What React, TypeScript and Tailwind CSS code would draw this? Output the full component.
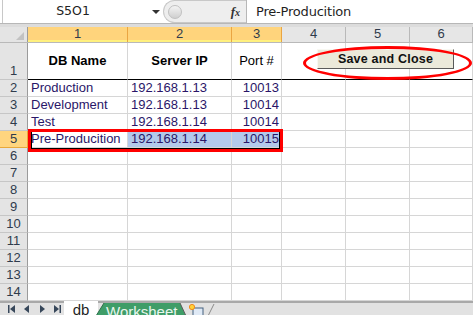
import React from 'react';

// column widths, in px: columns 1..6 (row header is 28px)
const COLS = [100, 104, 50, 64, 64, 63];

const rows: { name: string; ip: string; port: string }[] = [
  { name: 'Production', ip: '192.168.1.13', port: '10013' },
  { name: 'Development', ip: '192.168.1.13', port: '10014' },
  { name: 'Test', ip: '192.168.1.14', port: '10014' },
  { name: 'Pre-Producition', ip: '192.168.1.14', port: '10015' },
];

function RowHeader({ n, active }: { n: number; active?: boolean }) {
  return (
    <div
      className={`w-[28px] shrink-0 flex items-end justify-center border-r border-b text-[13px] leading-[16px] text-[#2f3b4c] ${
        active ? 'bg-[#ffd57f] border-r-[#e8a83a] border-b-[#e8a83a]' : 'bg-[#e4e4e4] border-r-[#9b9b9b] border-b-[#c6c6c6]'
      }`}
    >
      {n}
    </div>
  );
}

function Cell({ w, children, className = '' }: { w: number; children?: React.ReactNode; className?: string }) {
  return (
    <div
      style={{ width: w }}
      className={`shrink-0 border-r border-b border-[#d6d6d6] flex items-center overflow-hidden whitespace-nowrap ${className}`}
    >
      {children}
    </div>
  );
}

function ColHeader({ label, w, selected }: { label: string; w: number; selected?: boolean }) {
  return (
    <div
      style={{ width: w }}
      className={`shrink-0 flex flex-col border-r text-[13px] text-[#2f3b4c] ${
        selected ? 'border-[#eaa542]' : 'border-[#b9b9b9]'
      }`}
    >
      <div className={`flex-1 flex items-center justify-center leading-none ${selected ? 'bg-[#ffd47c]' : 'bg-[#e6e6e6]'}`}>
        {label}
      </div>
      <div className={`h-[3px] ${selected ? 'bg-[#fff07e]' : 'bg-[#e6e6e6]'}`} />
    </div>
  );
}

export default function App() {
  return (
    <div className="w-[473px] h-[315px] overflow-hidden bg-white relative font-['Liberation_Sans',Arial,sans-serif] select-none">
      {/* formula bar */}
      <div className="h-[24px] flex bg-white border-b border-[#b7b7b7]">
        <div className="w-[3px] border-r border-[#c8c8c8]" />
        <div className="w-[160px] flex items-center relative font-['DejaVu_Sans',sans-serif] text-[12.5px] text-[#222]">
          <span className="flex-1 text-center pr-[20px]">S5O1</span>
          <span className="absolute left-[149px] top-[10px] w-0 h-0 border-l-[4px] border-r-[4px] border-t-[4px] border-l-transparent border-r-transparent border-t-[#333]" />
        </div>
        <div className="w-[83px] h-[23px] flex items-center bg-[#eeeeee] rounded-l-[12px] border border-r-0 border-[#c8c8c8] relative">
          <span className="ml-[4px] w-[14px] h-[14px] rounded-full bg-gradient-to-b from-[#f4f4f4] to-[#cfcfcf] border border-[#c0c0c0]" />
          <span className="ml-auto mr-[6px] italic font-['Liberation_Serif',serif] font-bold text-[13px] text-[#333]">
            f<span className="text-[10px]">x</span>
          </span>
        </div>
        <div className="flex-1 border-l border-[#b7b7b7] flex items-center pl-[9px] text-[13px] text-[#1f1f1f] font-['DejaVu_Sans',sans-serif] tracking-[-0.2px]">
          Pre-Producition
        </div>
      </div>
      <div className="h-[3px] bg-[#dcdcdc]" />

      {/* column header row */}
      <div className="h-[16px] flex border-b border-[#b9b9b9]">
        <div className="w-[28px] shrink-0 bg-[#e4e4e4] border-r border-[#9b9b9b] relative">
          <span className="absolute right-[3px] bottom-[2px] w-0 h-0 border-l-[8px] border-b-[8px] border-l-transparent border-b-[#c2c2c2]" />
        </div>
        {COLS.map((w, i) => (
          <ColHeader key={i} label={String(i + 1)} w={w} selected={i < 3} />
        ))}
      </div>

      {/* row 1: titles */}
      <div className="h-[37px] flex">
        <RowHeader n={1} />
        <Cell w={COLS[0]} className="justify-center font-bold text-[13px] text-black border-b-black">DB Name</Cell>
        <Cell w={COLS[1]} className="justify-center font-bold text-[13px] text-black border-b-black">Server IP</Cell>
        <Cell w={COLS[2]} className="justify-center text-[13px] text-black border-b-black">Port #</Cell>
        <Cell w={COLS[3]} className="border-b-black" />
        <Cell w={COLS[4]} className="border-b-black" />
        <Cell w={COLS[5]} className="border-b-black" />
      </div>

      {/* data rows */}
      {rows.map((r, i) => {
        const sel = i === 3;
        return (
          <div key={i} className="h-[17px] flex text-[13px] text-[#2a1668]">
            <RowHeader n={i + 2} active={sel} />
            <Cell w={COLS[0]} className="pl-[3px]">{r.name}</Cell>
            <Cell w={COLS[1]} className={`pl-[3px] ${sel ? 'bg-[#b3c9eb]' : ''}`}>{r.ip}</Cell>
            <Cell w={COLS[2]} className={`justify-end pr-[2px] ${sel ? 'bg-[#b3c9eb]' : ''}`}>{r.port}</Cell>
            <Cell w={COLS[3]} />
            <Cell w={COLS[4]} />
            <Cell w={COLS[5]} />
          </div>
        );
      })}

      {/* empty rows */}
      {Array.from({ length: 9 }, (_, i) => (
        <div key={i} className="h-[17px] flex">
          <RowHeader n={i + 6} />
          {COLS.map((w, j) => (
            <Cell key={j} w={w} />
          ))}
        </div>
      ))}

      {/* sheet tabs */}
      <div className="h-[14px] flex items-start bg-[#e2e2e2] border-t-2 border-[#a9a9a9] relative">
        <div className="w-[64px] flex items-center gap-[7px] pl-[8px] pt-[2px]">
          <svg width="8" height="8" viewBox="0 0 8 8"><rect x="0" y="0" width="1.5" height="8" fill="#37475a" /><path d="M7 0 L2 4 L7 8 Z" fill="#37475a" /></svg>
          <svg width="8" height="8" viewBox="0 0 8 8"><path d="M6 0 L1 4 L6 8 Z" fill="#37475a" /></svg>
          <svg width="8" height="8" viewBox="0 0 8 8"><path d="M2 0 L7 4 L2 8 Z" fill="#37475a" /></svg>
          <svg width="8" height="8" viewBox="0 0 8 8"><path d="M1 0 L6 4 L1 8 Z" fill="#37475a" /><rect x="6.5" y="0" width="1.5" height="8" fill="#37475a" /></svg>
        </div>
        <div className="w-[34px] h-[14px] -mt-[2px] bg-white flex justify-center text-[15px] leading-[18px] text-[#1f1f1f] overflow-hidden">db</div>
        <div className="relative w-[90px] h-[13px] -ml-[2px] overflow-hidden">
          <svg className="absolute inset-0" width="90" height="13" viewBox="0 0 90 13">
            <path d="M0 13 L8 0 L84 0 L90 13 Z" fill="#3f9d68" />
            <path d="M0 13 L8 0" stroke="#2f6f4b" strokeWidth="1" />
            <path d="M84 0 L90 13" stroke="#5b5b5b" strokeWidth="1" />
          </svg>
          <span className="absolute left-[10px] top-[0px] text-[15px] leading-[18px] text-[#e9f6ee]">Worksheet</span>
        </div>
        <div className="relative w-[30px] h-[13px]">
          <svg className="absolute inset-0" width="30" height="13" viewBox="0 0 30 13">
            <rect x="7" y="5" width="10" height="9" fill="#dfe9f5" stroke="#45617f" strokeWidth="1" />
            <circle cx="6" cy="4" r="2.6" fill="#ffd23a" stroke="#f08a1c" strokeWidth="1" />
            <path d="M22 13 L28 1" stroke="#8a8a8a" strokeWidth="1" />
          </svg>
        </div>
      </div>

      {/* red box round row 5, cols 1-3, with the selection border just inside */}
      <div className="absolute left-[28px] top-[129px] w-[255px] h-[23px] border-[3px] border-[#ff0000] pointer-events-none">
        <div className="absolute left-0 top-0 right-0 h-[17px] border-l border-b border-r border-black" />
      </div>

      {/* Save and Close button with red ellipse */}
      <div className="absolute left-[317px] top-[49px] w-[137px] h-[20px] bg-[#ebe9da] border border-t-[#f8f8f2] border-l-[#f8f8f2] border-r-[#5a5a5a] border-b-[#5a5a5a] flex items-center justify-center font-bold text-[12.5px] text-[#111] tracking-[0.2px]">
        Save and Close
      </div>
      <div className="absolute left-[303px] top-[46px] w-[169px] h-[34px] rounded-[50%] border-[3px] border-[#ff0000] pointer-events-none" />
    </div>
  );
}
